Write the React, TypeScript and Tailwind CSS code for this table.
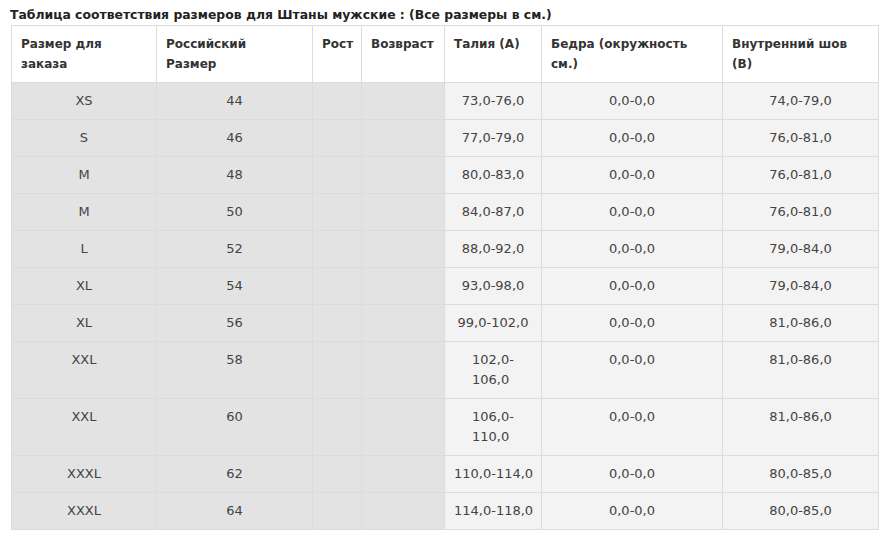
import React from 'react';

const rows: [string, string, string[], string, string][] = [
  ['XS', '44', ['73,0-76,0'], '0,0-0,0', '74,0-79,0'],
  ['S', '46', ['77,0-79,0'], '0,0-0,0', '76,0-81,0'],
  ['M', '48', ['80,0-83,0'], '0,0-0,0', '76,0-81,0'],
  ['M', '50', ['84,0-87,0'], '0,0-0,0', '76,0-81,0'],
  ['L', '52', ['88,0-92,0'], '0,0-0,0', '79,0-84,0'],
  ['XL', '54', ['93,0-98,0'], '0,0-0,0', '79,0-84,0'],
  ['XL', '56', ['99,0-102,0'], '0,0-0,0', '81,0-86,0'],
  ['XXL', '58', ['102,0-', '106,0'], '0,0-0,0', '81,0-86,0'],
  ['XXL', '60', ['106,0-', '110,0'], '0,0-0,0', '81,0-86,0'],
  ['XXXL', '62', ['110,0-114,0'], '0,0-0,0', '80,0-85,0'],
  ['XXXL', '64', ['114,0-118,0'], '0,0-0,0', '80,0-85,0'],
];

// header labels, each inner array is one printed line
const headers: string[][] = [
  ['Размер для', 'заказа'],
  ['Российский', 'Размер'],
  ['Рост'],
  ['Возвраст'],
  ['Талия (A)'],
  ['Бедра (окружность', 'см.)'],
  ['Внутренний шов', '(B)'],
];

const grey = 'border border-[#dcdcdc] bg-[#e3e3e3] px-[9px] py-[8px] text-center align-top text-[#444]';
const light = 'border border-[#dcdcdc] bg-[#f3f3f3] px-[9px] py-[8px] text-center align-top text-[#444]';

export default function App() {
  return (
    <div className="min-h-screen bg-white px-[11px] pt-[7px] font-['DejaVu_Sans',Verdana,sans-serif]">
      <h1 className="-ml-px text-[12.4px] leading-[16px] font-bold text-[#222]">
        Таблица соответствия размеров для Штаны мужские : (Все размеры в см.)
      </h1>
      <table className="mt-[2px] w-[867px] table-fixed border-collapse text-[13px] leading-[20px]">
        <colgroup>
          <col className="w-[145px]" />
          <col className="w-[156px]" />
          <col className="w-[49px]" />
          <col className="w-[83px]" />
          <col className="w-[97px]" />
          <col className="w-[181px]" />
          <col className="w-[156px]" />
        </colgroup>
        <thead>
          <tr>
            {headers.map((h, i) => (
              <th
                key={i}
                className="h-[57px] border border-[#dcdcdc] bg-white px-[9px] py-[8px] text-left align-top text-[12px] font-bold text-[#333]"
              >
                {h.map((line, j) => (
                  <div key={j} className="whitespace-nowrap">{line}</div>
                ))}
              </th>
            ))}
          </tr>
        </thead>
        <tbody>
          {rows.map((r, i) => (
            <tr key={i}>
              <td className={grey}>{r[0]}</td>
              <td className={grey}>{r[1]}</td>
              <td className={grey}></td>
              <td className={grey}></td>
              <td className={light}>
                <div className="inline-block text-left">
                  {r[2].map((line, j) => (
                    <div key={j} className="whitespace-nowrap">{line}</div>
                  ))}
                </div>
              </td>
              <td className={light}>{r[3]}</td>
              <td className={light}>{r[4]}</td>
            </tr>
          ))}
        </tbody>
      </table>
    </div>
  );
}
